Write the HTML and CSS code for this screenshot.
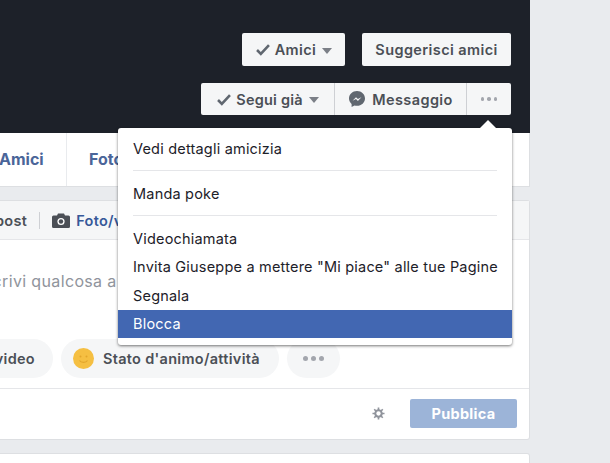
FILE: index.html
```html
<!DOCTYPE html>
<html lang="it">
<head>
    <meta charset="UTF-8">
    <meta name="viewport" content="width=device-width, initial-scale=1.0">
    <title>Profilo</title>
    <link rel="stylesheet" href="styles.css">
</head>
<body>
    <div class="page">
        <div class="column">
            <div class="cover">
                <div class="cover-row">
                    <div class="btn">
                        <svg class="check" viewBox="0 0 14 12"><path d="M1.500 6.500 L5 10 L12.500 2" fill="none" stroke="#606770" stroke-width="2.400"/></svg>
                        Amici
                        <span class="caret"></span>
                    </div>
                    <div class="btn btn-suggest">Suggerisci amici</div>
                </div>
                <div class="cover-row btn-group">
                    <div class="btn btn-follow">
                        <svg class="check" viewBox="0 0 14 12"><path d="M1.500 6.500 L5 10 L12.500 2" fill="none" stroke="#606770" stroke-width="2.400"/></svg>
                        Segui già
                        <span class="caret"></span>
                    </div>
                    <div class="btn btn-message">
                        <svg class="messenger" viewBox="0 0 18 18"><path d="M9 1C4.500 1 1 4.300 1 8.400c0 2.200 1 4.100 2.600 5.500V17l2.900-1.600c.8.200 1.600.3 2.500.3 4.500 0 8-3.300 8-7.300S13.500 1 9 1z" fill="#606770"/><path d="M4.500 10.800 8 7.200l1.900 1.900 3.500-1.900-3.500 3.700-1.900-2z" fill="#f5f6f7"/></svg>
                        Messaggio
                    </div>
                    <div class="btn btn-more"><span class="dot"></span><span class="dot"></span><span class="dot"></span></div>
                </div>
            </div>

            <div class="tabs">
                <div class="tab tab-friends">Amici</div>
                <div class="tab tab-photos">Foto</div>
            </div>

            <div class="card composer">
                <div class="composer-head">
                    <span class="head-post">post</span>
                    <span class="head-sep"></span>
                    <svg class="camera" viewBox="0 0 18 15"><path d="M1.500 2.500H5L6 .5h6l1 2h3.500A1.500 1.500 0 0 1 18 4v9.500a1.500 1.500 0 0 1-1.500 1.500h-15A1.500 1.500 0 0 1 0 13.500V4a1.500 1.500 0 0 1 1.500-1.500z" fill="#4b4f56"/><circle cx="9" cy="8.500" r="3.600" fill="#fff"/><circle cx="9" cy="8.500" r="2.200" fill="#4b4f56"/></svg>
                    <span class="head-photo">Foto/video</span>
                </div>
                <div class="composer-body">Scrivi qualcosa a</div>
                <div class="chips">
                    <div class="chip chip-video">Foto/video</div>
                    <div class="chip chip-mood">
                        <svg class="smile" viewBox="0 0 21 21"><circle cx="10.500" cy="10.500" r="10.500" fill="#f5bf42"/><circle cx="7.500" cy="8.500" r="1" fill="#e2a52b"/><circle cx="13.500" cy="8.500" r="1" fill="#e2a52b"/><path d="M6.500 12.500c1.500 2.500 6.500 2.500 8 0" fill="none" stroke="#e2a52b" stroke-width="1.200"/></svg>
                        Stato d'animo/attività
                    </div>
                    <div class="chip chip-more"><span class="dot"></span><span class="dot"></span><span class="dot"></span></div>
                </div>
                <div class="composer-foot">
                    <svg class="gear" viewBox="0 0 14 14"><circle cx="7" cy="7" r="3.400" fill="none" stroke="#90949c" stroke-width="2.400"/><path d="M7 .5v13M.5 7h13M2.400 2.400l9.200 9.200M11.600 2.400l-9.200 9.200" stroke="#90949c" stroke-width="1.800"/><circle cx="7" cy="7" r="2.300" fill="#fff"/></svg>
                    <div class="publish">Pubblica</div>
                </div>
            </div>

            <div class="card next-card"></div>
        </div>

        <div class="menu">
            <div class="menu-arrow"></div>
            <div class="menu-item">Vedi dettagli amicizia</div>
            <div class="menu-sep"></div>
            <div class="menu-item">Manda poke</div>
            <div class="menu-sep"></div>
            <div class="menu-item">Videochiamata</div>
            <div class="menu-item">Invita Giuseppe a mettere "Mi piace" alle tue Pagine</div>
            <div class="menu-item">Segnala</div>
            <div class="menu-item item-active">Blocca</div>
        </div>
    </div>
</body>
</html>
```

FILE: styles.css
```css
html, body {
    margin: 0;
    height: 100%;
    overflow: hidden;
}
body {
    font-family: Inter, "Liberation Sans", Arial, sans-serif;
    background-color: #e9ebee;
    color: #4b4f56;
}
.page {
    position: relative;
    width: 610px;
    height: 463px;
    overflow: hidden;
}
.column {
    width: 530px;
    overflow: hidden;
}

/* cover */
.cover {
    height: 133px;
    box-sizing: border-box;
    padding: 33px 19px 0 0;
    background-color: #1d2129;
    display: flex;
    flex-direction: column;
    align-items: flex-end;
    gap: 17px;
}
.cover-row {
    display: flex;
    gap: 17px;
}
.btn {
    height: 33px;
    box-sizing: border-box;
    display: flex;
    align-items: center;
    justify-content: center;
    background-color: #f5f6f7;
    border-radius: 2px;
    color: #4b4f56;
    font-size: 14.5px;
    letter-spacing: 0.4px;
    font-weight: 600;
    white-space: nowrap;
}
.btn:first-child {
    width: 103px;
}
.btn-suggest.btn-suggest {
    width: 149px;
}
.btn-group {
    gap: 0;
}
.btn-group .btn {
    height: 32px;
    border-left: 1px solid #ced0d4;
    border-radius: 0;
}
.btn-group .btn:first-child {
    border-left: none;
    border-radius: 2px 0 0 2px;
}
.btn-group .btn:last-child {
    border-radius: 0 2px 2px 0;
}
.btn-group .btn-follow {
    width: 133px;
    letter-spacing: 0.2px;
}
.btn-message {
    width: 132px;
}
.btn-more {
    width: 45px;
    gap: 3px;
}
.btn-more .dot {
    width: 3.500px;
    height: 3.500px;
    background-color: #a3a6ad;
}
.check {
    width: 16px;
    height: 13px;
    margin-right: 4px;
}
.caret {
    width: 0;
    height: 0;
    margin-left: 6px;
    margin-top: 2px;
    border-left: 5px solid transparent;
    border-right: 5px solid transparent;
    border-top: 6px solid #7b7f87;
}
.messenger {
    width: 18px;
    height: 18px;
    margin-right: 6px;
}
.dot {
    width: 5px;
    height: 5px;
    border-radius: 50%;
    background-color: #a3a6ad;
}

/* tabs */
.tabs {
    height: 54px;
    display: flex;
    background-color: #fff;
    border-bottom: 1px solid #dddfe2;
    box-sizing: border-box;
    border-right: 1px solid #dddfe2;
}
.tab {
    display: flex;
    align-items: center;
    padding-bottom: 2px;
    color: #4a6599;
    font-size: 16px;
    font-weight: 700;
}
.tab-friends {
    width: 67px;
    margin-left: -1px;
    border-right: 1px solid #e9ebee;
}
.tab-photos {
    padding-left: 22px;
}

/* composer */
.card {
    background-color: #fff;
    border: 1px solid #dddfe2;
    border-left: none;
    border-radius: 0 3px 3px 0;
    box-sizing: border-box;
}
.composer {
    margin-top: 13px;
    height: 240px;
    display: flex;
    flex-direction: column;
}
.composer-head {
    height: 39px;
    flex: none;
    box-sizing: border-box;
    display: flex;
    align-items: center;
    background-color: #f5f6f7;
    border-bottom: 1px solid #e5e6e9;
    font-size: 14.5px;
    letter-spacing: 0.3px;
    font-weight: 600;
    color: #4b4f56;
}
.head-post {
    margin-left: -5px;
}
.head-sep {
    width: 1px;
    height: 17px;
    margin: 0 12px 0 12px;
    background-color: #ced0d4;
}
.camera {
    width: 18px;
    height: 15px;
    margin-right: 6px;
}
.head-photo {
    color: #365899;
}
.composer-body {
    height: 84px;
    flex: none;
    box-sizing: border-box;
    padding-top: 31px;
    margin-left: -18px;
    font-size: 16px;
    letter-spacing: 0.35px;
    color: #90949c;
    white-space: nowrap;
}
.chips {
    height: 65px;
    flex: none;
    box-sizing: border-box;
    padding-top: 15px;
    display: flex;
    gap: 8px;
    margin-left: -37px;
    border-bottom: 1px solid #e5e6e9;
}
.chip {
    height: 39px;
    box-sizing: border-box;
    display: flex;
    align-items: center;
    justify-content: center;
    background-color: #f5f6f7;
    border-radius: 20px;
    font-size: 14.5px;
    letter-spacing: 0.3px;
    font-weight: 600;
    color: #4b4f56;
    white-space: nowrap;
}
.chip-video {
    width: 90px;
    justify-content: flex-end;
    padding-right: 18px;
    overflow: hidden;
}
.chip-mood {
    width: 218px;
    justify-content: flex-start;
    padding-left: 12px;
    gap: 9px;
}
.smile {
    width: 21px;
    height: 21px;
}
.chip-more {
    width: 53px;
    gap: 3px;
}
.composer-foot {
    flex: 1;
    display: flex;
    align-items: center;
    justify-content: flex-end;
    padding: 0 12px 2px 0;
}
.gear {
    width: 13px;
    height: 13px;
    margin-right: 25px;
}
.publish {
    width: 107px;
    height: 29px;
    display: flex;
    align-items: center;
    justify-content: center;
    background-color: #9cb4d8;
    border-radius: 2px;
    color: #fff;
    font-size: 14.5px;
    letter-spacing: 0.3px;
    font-weight: 700;
}
.next-card {
    margin-top: 13px;
    height: 60px;
}

/* menu */
.menu {
    position: absolute;
    left: 118px;
    top: 128px;
    width: 394px;
    height: 217px;
    box-sizing: border-box;
    padding-top: 6px;
    background-color: #fff;
    border-radius: 3px;
    box-shadow: 0 1px 3px rgba(0, 0, 0, 0.55);
}
.menu-arrow {
    position: absolute;
    right: 16px;
    top: -8px;
    width: 0;
    height: 0;
    border-left: 8px solid transparent;
    border-right: 8px solid transparent;
    border-bottom: 8px solid #fff;
}
.menu-item {
    height: 28.500px;
    display: flex;
    align-items: center;
    padding-left: 15px;
    font-size: 14.5px;
    letter-spacing: 0.2px;
    color: #1d2129;
    white-space: nowrap;
}
.menu-sep {
    height: 1px;
    margin: 7.500px 15px 8px;
    background-color: #e5e6e9;
}
.item-active {
    height: 28px;
    background-color: #4267b2;
    color: #fff;
}
```
